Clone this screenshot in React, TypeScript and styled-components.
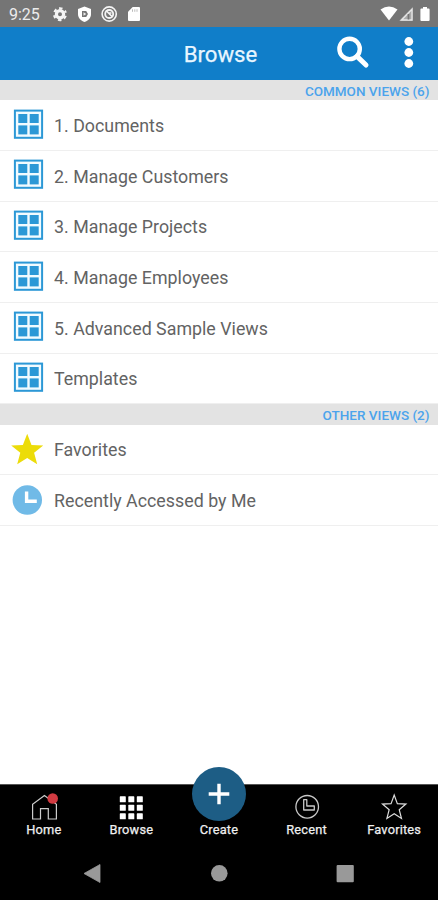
import React from "react";
import styled, { createGlobalStyle } from "styled-components";

const GlobalStyle = createGlobalStyle`
  * { box-sizing: border-box; }
  body { margin: 0; background: #fff; font-family: Roboto, sans-serif; }
  svg { display: block; flex: none; }
`;

const Screen = styled.div`
  width: 438px;
  height: 900px;
  display: flex;
  flex-direction: column;
  overflow: hidden;
  background: #fff;
`;

const StatusBar = styled.div`
  height: 27px;
  flex: none;
  display: flex;
  justify-content: space-between;
  background: #757575;
`;

const Clock = styled.span`
  width: 43px;
  padding-left: 9px;
  color: #ececec;
  font-size: 16px;
  line-height: 29px;
`;

const StatusLeft = styled.div`
  display: flex;
`;

const Header = styled.header`
  height: 53px;
  flex: none;
  display: grid;
  grid-template-columns: 120px 1fr 120px;
  background: #107ec9;
`;

const Title = styled.h1`
  grid-column: 2;
  margin: 0;
  padding-left: 3px;
  text-align: center;
  color: #e8f6ff;
  font-size: 22.2px;
  font-weight: 400;
  line-height: 54px;
  -webkit-text-stroke: 0.25px #e8f6ff;
`;

const SectionHeader = styled.h2`
  height: 20.4px;
  flex: none;
  margin: 0;
  padding-right: 8.5px;
  background: #e3e3e3;
  color: #4ba3ec;
  font-size: 13.5px;
  font-weight: 500;
  line-height: 22px;
  text-align: right;
`;

const List = styled.ul`
  margin: 0;
  padding: 0;
  list-style: none;
`;

const Row = styled.li`
  height: 50.65px;
  display: flex;
  align-items: center;
  padding-left: 11px;
  gap: 10px;
  border-bottom: 1px solid #efefef;
`;

const RowLabel = styled.span`
  color: #636363;
  font-size: 17.8px;
  line-height: 24px;
  padding-top: 2px;
  letter-spacing: 0.02px;
`;

const Footer = styled.footer`
  height: 116px;
  flex: none;
  margin-top: auto;
  background: #000;
  border-top: 1px solid #555;
`;

const Tabs = styled.nav`
  height: 60px;
  display: grid;
  grid-template-columns: repeat(5, 1fr);
`;

const Tab = styled.div`
  display: flex;
  flex-direction: column;
  align-items: center;
  padding-top: 8px;
`;

const TabLabel = styled.span`
  margin-top: 1px;
  color: #f0f0f0;
  font-size: 12.8px;
  font-weight: 400;
  line-height: 16px;
  letter-spacing: 0.2px;
  -webkit-text-stroke: 0.25px #f0f0f0;
`;

const CreateButton = styled.div`
  width: 54px;
  height: 54px;
  margin-top: -26px;
  border-radius: 50%;
  background: #1d5d85;
  display: flex;
  align-items: center;
  justify-content: center;
`;

const SystemBar = styled.div`
  height: 55px;
  display: flex;
  justify-content: center;
  padding-top: 14px;
`;

const STAR = "M0 -16 L4.3 -4.8 L16 -4.2 L6.9 3.1 L10 14.5 L0 8.3 L-10 14.5 L-6.9 3.1 L-16 -4.2 L-4.3 -4.8Z";

const ViewIcon = () => (
  <svg width="33" height="33" viewBox="0 0.3 33 33">
    <rect x="3.9" y="1.9" width="27.2" height="27.2" fill="#f2fbff" stroke="#2c98d6" strokeWidth="2" />
    <g fill="#2c98d6">
      <rect x="7.3" y="5.3" width="9" height="9" />
      <rect x="18.7" y="5.3" width="9" height="9" />
      <rect x="7.3" y="16.7" width="9" height="9" />
      <rect x="18.7" y="16.7" width="9" height="9" />
    </g>
  </svg>
);

const FavoriteIcon = () => (
  <svg width="33" height="33" viewBox="0 0 33 33">
    <path transform="translate(16.2 16.7)" d={STAR} fill="#ecdc09" />
  </svg>
);

const RecentIcon = () => (
  <svg width="33" height="33" viewBox="0 0 33 33">
    <circle cx="16.3" cy="16" r="14.7" fill="#70bae7" />
    <path d="M15.6 7.5V17.3H25.8" fill="none" stroke="#fff" strokeWidth="3.4" />
  </svg>
);

const StatusIcons = () => (
  <svg width="105" height="27" viewBox="43 0 105 27">
    <g fill="none" stroke="#f4f4f4">
      <circle cx="60" cy="14.2" r="3.6" strokeWidth="3.2" />
      <circle cx="60" cy="14.2" r="5.9" strokeWidth="2.2" strokeDasharray="3.2 2.98" strokeDashoffset="1.6" transform="rotate(-30 60 14.2)" />
      <circle cx="109.2" cy="14" r="7.1" strokeWidth="1.6" />
      <circle cx="109.2" cy="14" r="4" strokeWidth="1.8" />
      <path d="M106 10.5l6.5 6.5M108.5 13h3" strokeWidth="1.7" />
    </g>
    <path d="M84.5 6.6L91 9V14C91 18 88.2 20.7 84.5 22C80.8 20.7 78 18 78 14V9Z" fill="#fff" />
    <path d="M82 11h4.2l1.8 3-1.8 3h-4.2z" fill="#757575" />
    <path d="M83.5 12.3l2.8 1.7-2.8 1.8z" fill="#eee" />
    <path d="M132.7 7H139q1 0 1 1V20q0 1-1 1H129q-1 0-1-1V11.7Z" fill="#fff" />
    <path d="M132.5 9.3v2.5M134.8 9.3v2.5M137 9.3v2.5" stroke="#aaa" strokeWidth=".8" />
  </svg>
);

const SignalIcons = () => (
  <svg width="60" height="27" viewBox="378 0 60 27">
    <path d="M380.5 9.6Q389 3.3 397.5 9.6L389 20.5Z" fill="#fff" />
    <path d="M399.2 20.8L412.8 7V20.8Z" fill="#aaa" />
    <path d="M401.5 20L412 9.3V20Z" fill="none" stroke="#e7e7e7" strokeWidth="1.3" />
    <path d="M408.5 14v5.5" stroke="#777" strokeWidth="1.7" />
    <path d="M423 7h4v1.5h1.6q1 0 1 1V20q0 1-1 1H421.4q-1 0-1-1V9.5q0-1 1-1H423Z" fill="#fff" />
  </svg>
);

const HeaderActions = () => (
  <svg width="120" height="53" viewBox="318 27 120 53">
    <circle cx="349.6" cy="48.9" r="10.2" fill="none" stroke="#fff" strokeWidth="4.4" />
    <path d="M357 56.4L366 65" stroke="#fff" strokeWidth="5" strokeLinecap="round" />
    <g fill="#fff">
      <circle cx="408.8" cy="41.5" r="4.4" />
      <circle cx="408.8" cy="52.5" r="4.4" />
      <circle cx="408.8" cy="63.5" r="4.4" />
    </g>
  </svg>
);

const HomeTabIcon = () => (
  <svg width="28" height="28" viewBox="30 793 28 28">
    <path d="M32.6 819V804.2L44.4 795.6L56.4 804.2V819H48.3V808.7H40.5V819Z" fill="none" stroke="#ccc" strokeWidth="1.2" />
    <circle cx="52.7" cy="798.5" r="5.3" fill="#d23b42" />
  </svg>
);

const GridTabIcon = () => (
  <svg width="28" height="28" viewBox="117 793 28 28">
    <g fill="#fff">
      {[0, 1, 2].map((r) =>
        [0, 1, 2].map((c) => (
          <rect key={`${r}${c}`} x={119.8 + c * 8.5} y={796.3 + r * 8.5} width="6" height="6" rx=".6" />
        ))
      )}
    </g>
  </svg>
);

const ClockTabIcon = () => (
  <svg width="28" height="28" viewBox="293 793 28 28" fill="none" stroke="#c8c8c8" strokeWidth="1.3">
    <circle cx="307.2" cy="806.8" r="11.3" />
    <path d="M303.7 799.7H306.8V806H314.3V810H303.7Z" strokeLinejoin="round" />
  </svg>
);

const StarTabIcon = () => (
  <svg width="28" height="28" viewBox="0 0 28 28">
    <path transform="translate(14.2 14.3) scale(.73 .77)" d={STAR} fill="none" stroke="#ddd" strokeWidth="1.6" />
  </svg>
);

const PlusIcon = () => (
  <svg width="22" height="22" viewBox="0 0 22 22">
    <path d="M11 .7V21.3M.7 11H21.3" stroke="#fff" strokeWidth="3.4" />
  </svg>
);

const SystemIcons = () => (
  <svg width="280" height="28" viewBox="79 859.5 280 28" fill="#999">
    <path d="M84 874L100 865V883Z" stroke="#999" strokeWidth=".8" strokeLinejoin="round" />
    <circle cx="219.3" cy="873.8" r="8.3" />
    <rect x="336.6" y="865.4" width="17.2" height="17.3" rx="1" />
  </svg>
);

const COMMON_VIEWS = [
  "1. Documents",
  "2. Manage Customers",
  "3. Manage Projects",
  "4. Manage Employees",
  "5. Advanced Sample Views",
  "Templates",
];

export default function App() {
  return (
    <>
      <GlobalStyle />
      <Screen>
        <StatusBar>
          <StatusLeft>
            <Clock>9:25</Clock>
            <StatusIcons />
          </StatusLeft>
          <SignalIcons />
        </StatusBar>
        <Header>
          <Title>Browse</Title>
          <HeaderActions />
        </Header>
        <SectionHeader>COMMON VIEWS (6)</SectionHeader>
        <List>
          {COMMON_VIEWS.map((label) => (
            <Row key={label}>
              <ViewIcon />
              <RowLabel>{label}</RowLabel>
            </Row>
          ))}
        </List>
        <SectionHeader>OTHER VIEWS (2)</SectionHeader>
        <List>
          <Row>
            <FavoriteIcon />
            <RowLabel>Favorites</RowLabel>
          </Row>
          <Row>
            <RecentIcon />
            <RowLabel>Recently Accessed by Me</RowLabel>
          </Row>
        </List>
        <Footer>
          <Tabs>
            <Tab><HomeTabIcon /><TabLabel>Home</TabLabel></Tab>
            <Tab><GridTabIcon /><TabLabel>Browse</TabLabel></Tab>
            <Tab>
              <CreateButton><PlusIcon /></CreateButton>
              <TabLabel>Create</TabLabel>
            </Tab>
            <Tab><ClockTabIcon /><TabLabel>Recent</TabLabel></Tab>
            <Tab><StarTabIcon /><TabLabel>Favorites</TabLabel></Tab>
          </Tabs>
          <SystemBar><SystemIcons /></SystemBar>
        </Footer>
      </Screen>
    </>
  );
}
